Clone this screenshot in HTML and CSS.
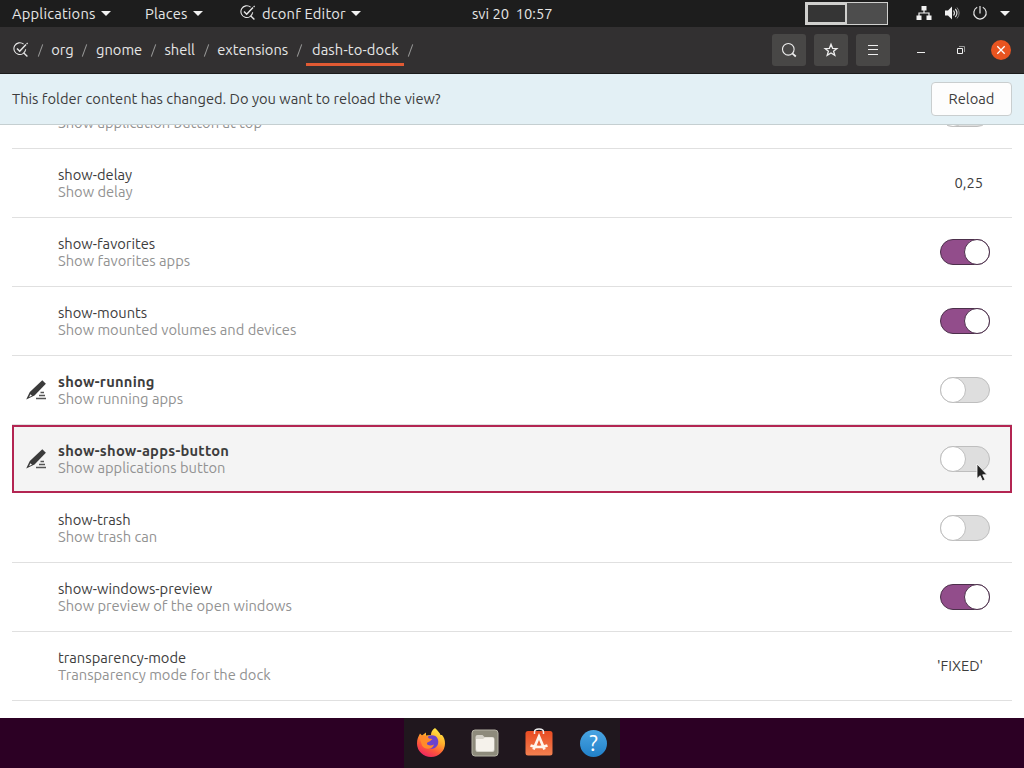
FILE: index.html
```
<!DOCTYPE html>
<html lang="en">
  <head>
    <meta charset="UTF-8" />
    <meta name="viewport" content="width=device-width, initial-scale=1.0" />
    <title>dconf Editor</title>
    <link rel="stylesheet" href="styles.css" />
  </head>
  <body>
    <!-- Shared icons -->
    <svg class="symbols" width="0" height="0">
      <symbol id="dconf" viewBox="0 0 16 16">
        <g fill="none" stroke="currentColor">
          <path d="M10.6 2.1A5.9 5.9 0 1 0 12.7 7.3" stroke-width="1.1" />
          <path d="M4 6.5l2.7 2.7 6.3-6.7" stroke-width="1.5" />
          <path d="M10.8 11l3.6 3.4" stroke-width="1.4" />
          <path d="M13.6 1.9l1-.8" stroke-width="1.3" />
        </g>
      </symbol>
      <symbol id="pencil" viewBox="0 0 22 22">
        <path d="M17.3 1.2l3.6 3.6L9.5 16.6 1.2 20.6l3.6-7.6z" fill="#3b3b3b" />
        <path d="M5.4 15.2l1.6 1.5-2.9 1.4z" fill="#fff" />
        <path d="M15.5 13.5h3.5M14 16.5h6M11 19.5h10" stroke="#555" stroke-width="1.3" />
      </symbol>
    </svg>

    <nav class="panel">
      <span class="menu menu-apps">Applications<i class="arrow"></i></span>
      <span class="menu menu-places">Places<i class="arrow"></i></span>
      <span class="menu menu-dconf"><svg class="icon"><use href="#dconf" /></svg>dconf Editor<i class="arrow"></i></span>
      <time class="clock">svi 20&nbsp; 10:57</time>
      <div class="workspaces"><span class="current"></span><span></span></div>
      <div class="tray">
        <svg width="16" height="16" viewBox="0 0 16 16" fill="#f2f2f2">
          <path d="M5.5 1h5v4.5h-5zM.5 10.5h5V15h-5zM10.5 10.5h5V15h-5z" />
          <path d="M8 5v3M3 11V8h10v3" fill="none" stroke="#f2f2f2" stroke-width="1.2" />
        </svg>
        <svg width="16" height="16" viewBox="0 0 16 16" fill="none" stroke="#ddd">
          <path d="M1 5.5h3l4-4v13l-4-4H1z" fill="#f2f2f2" stroke="none" />
          <path d="M9.5 5.5q2 2.5 0 5M11.3 4q3.3 4 0 8" stroke-width="1.2" />
          <path d="M13 2.5q4.3 5.5 0 11" stroke="#888" />
        </svg>
        <svg width="16" height="16" viewBox="0 0 16 16" fill="none" stroke="#e8e8e8" stroke-width="1.2">
          <path d="M5.2 2.3a6.2 6.2 0 1 0 5.6 0M8 1v7.5" />
        </svg>
        <i class="arrow"></i>
      </div>
    </nav>

    <header class="titlebar">
      <div class="path">
        <svg class="icon"><use href="#dconf" /></svg>
        <i class="slash"></i>
        <span class="crumb">org</span>
        <i class="slash"></i>
        <span class="crumb">gnome</span>
        <i class="slash"></i>
        <span class="crumb">shell</span>
        <i class="slash"></i>
        <span class="crumb">extensions</span>
        <i class="slash"></i>
        <span class="crumb active">dash-to-dock</span>
        <i class="slash"></i>
      </div>
      <div class="tools">
        <button>
          <svg width="16" height="16" viewBox="0 0 16 16" fill="none" stroke="#eee" stroke-width="1.1">
            <circle cx="7.3" cy="7.3" r="5.8" />
            <path d="M11.3 11.3l3.5 3.2" stroke-width="1.7" />
          </svg>
        </button>
        <button>
          <svg width="16" height="16" viewBox="0 0 16 16" fill="none" stroke="#eee" stroke-width="1.3">
            <path d="M8 2.3l1.6 4 4.3.2-3.3 2.7 1.2 4.2L8 11l-3.8 2.4 1.2-4.2-3.3-2.7 4.3-.2z" />
          </svg>
        </button>
        <button>
          <svg width="16" height="16" viewBox="0 0 16 16" stroke="#eee">
            <path d="M3 3.5h10M3 7.5h10M3 12.5h10" />
          </svg>
        </button>
      </div>
      <div class="window-controls">
        <svg width="16" height="16" viewBox="0 0 16 16"><path d="M4 10.5h8" stroke="#eee" /></svg>
        <svg width="16" height="16" viewBox="0 0 16 16" fill="none">
          <path d="M4.500 6.500h5v5h-5z" stroke="#f2f2f2" />
          <path d="M6 4.500h5.500V10" stroke="#999" />
        </svg>
        <span class="close">
          <svg width="10" height="10" viewBox="0 0 10 10"><path d="M1.3 1.3l7.4 7.4M8.7 1.3L1.3 8.7" stroke="#fff" stroke-width="1.3" /></svg>
        </span>
      </div>
    </header>

    <div class="infobar">
      <span>This folder content has changed. Do you want to reload the view?</span>
      <button>Reload</button>
    </div>

    <main class="keys">
      <div class="key">
        <div class="text"><b></b><span>Show application button at top</span></div>
        <i class="switch"></i>
      </div>
      <div class="key">
        <div class="text"><b>show-delay</b><span>Show delay</span></div>
        <span class="value">0,25</span>
      </div>
      <div class="key">
        <div class="text"><b>show-favorites</b><span>Show favorites apps</span></div>
        <i class="switch on"></i>
      </div>
      <div class="key">
        <div class="text"><b>show-mounts</b><span>Show mounted volumes and devices</span></div>
        <i class="switch on"></i>
      </div>
      <div class="key edited">
        <svg class="pencil"><use href="#pencil" /></svg>
        <div class="text"><b>show-running</b><span>Show running apps</span></div>
        <i class="switch"></i>
      </div>
      <div class="key edited selected">
        <svg class="pencil"><use href="#pencil" /></svg>
        <div class="text"><b>show-show-apps-button</b><span>Show applications button</span></div>
        <i class="switch"></i>
        <svg class="cursor" width="12" height="20" viewBox="0 0 12 20">
          <path d="M1 1v14.5l3.2-2.800 2.300 5.200 2.500-1.100-2.300-5h4.500z" fill="#222" stroke="#fff" stroke-width=".8" />
        </svg>
      </div>
      <div class="key">
        <div class="text"><b>show-trash</b><span>Show trash can</span></div>
        <i class="switch"></i>
      </div>
      <div class="key">
        <div class="text"><b>show-windows-preview</b><span>Show preview of the open windows</span></div>
        <i class="switch on"></i>
      </div>
      <div class="key">
        <div class="text"><b>transparency-mode</b><span>Transparency mode for the dock</span></div>
        <span class="value">'FIXED'</span>
      </div>
    </main>

    <footer class="desktop">
      <div class="dock">
        <!-- Firefox -->
        <svg width="30" height="30" viewBox="0 0 30 30">
          <defs>
            <linearGradient id="fox" x1=".8" y1="0" x2=".3" y2="1">
              <stop offset="0" stop-color="#fff04a" />
              <stop offset=".4" stop-color="#ffad2b" />
              <stop offset=".7" stop-color="#ff5939" />
              <stop offset="1" stop-color="#ee2364" />
            </linearGradient>
          </defs>
          <path d="M19 0c3 3 5 5 5.500 7l1.500 0c2 2 3 5 3 8.500a14 13.500 0 0 1-28 0c0-4 1-6 2-8l1-2 2 2 4-3v3l5-.5c0-3 1-5 4-7z" fill="url(#fox)" />
          <path d="M12 8.500c3-2 8-1.500 9.500 2 2 4 0 9-4 10-4 .8-8-1-8-5z" fill="#6a42cc" />
          <path d="M3 8l4-.5 4 .5 2 2.500 3.500.5-3 2.500c-1.500.8-3 1-2.500 2.500 1.500 2 4.500 1.500 7 .5-1 5-9 6-12 1z" fill="#ff8a2b" />
        </svg>
        <!-- Files -->
        <svg width="30" height="30" viewBox="0 0 30 30">
          <rect x="2" y="2" width="26" height="26" rx="3" fill="#8e8b7c" stroke="#b5b3a5" />
          <path d="M5.500 9q0-2 2-2h5l2 2h8q2 0 2 2v11q0 2-2 2h-15q-2 0-2-2z" fill="#d5d2c9" />
          <path d="M6 11h7l2-1.500h7q2 0 2 2v9.500q0 2-2 2H8q-2 0-2-2z" fill="#f5f2eb" />
        </svg>
        <!-- Ubuntu Software -->
        <svg width="30" height="30" viewBox="0 0 30 30" fill="none">
          <defs>
            <linearGradient id="bag" x1="0" y1="0" x2="0" y2="1">
              <stop offset="0" stop-color="#e94b22" />
              <stop offset="1" stop-color="#f38050" />
            </linearGradient>
          </defs>
          <rect x="1.500" y="3" width="27" height="24.500" rx="2.500" fill="url(#bag)" />
          <path d="M10.500 6V4q0-3 4.500-3t4.500 3v2" stroke="#eee" stroke-width="1.500" />
          <path d="M9.500 21.500L15 8.500l5.500 13M6.500 17.500q8.500 3 17 0" stroke="#fff5ed" stroke-width="2.700" />
        </svg>
        <!-- Help -->
        <span class="help">?</span>
      </div>
    </footer>
  </body>
</html>
```
FILE: styles.css
```
*,
*::before {
  box-sizing: border-box;
}

body {
  display: flex;
  flex-direction: column;
  height: 768px;
  margin: 0;
  overflow: hidden;
  font: 14.7px/17px Ubuntu, 'Noto Sans', sans-serif;
  color: #3d3d3d;
  background: #fff;
}

svg {
  flex: none;
}

button {
  font: inherit;
  color: inherit;
}

.symbols {
  position: absolute;
}

.icon {
  width: 16px;
  height: 16px;
}

.arrow {
  border: 5px solid transparent;
  border-top-color: #f2f2f2;
  border-bottom: 0;
}

/* Top panel */
.panel {
  display: flex;
  align-items: center;
  flex: none;
  height: 27px;
  padding: 0 0 1px 12px;
  color: #e6e6e6;
  background: #1d1d1d;
  white-space: nowrap;
}

.menu {
  display: flex;
  align-items: center;
  letter-spacing: 0.2px;
}
.menu .arrow {
  margin-left: 5px;
}
.menu .icon {
  margin-right: 6px;
}
.menu-apps {
  width: 133px;
}
.menu-places {
  width: 95px;
}
.menu-dconf {
  width: 232px;
}

.clock {
  width: 333px;
}

.workspaces {
  display: flex;
  width: 83px;
  height: 23px;
  margin-top: 1px;
  border: 1px solid #d0d0ce;
  background: #4d4d4d;
}
.workspaces .current {
  width: 41px;
  border: 2px solid #d0d0ce;
  background: #353535;
}

.tray {
  display: flex;
  align-items: center;
  gap: 12px;
  margin-left: 28px;
}

/* Titlebar */
.titlebar {
  display: flex;
  align-items: center;
  flex: none;
  height: 47px;
  padding: 0 13px;
  color: #e6e6e6;
  background: #323031;
  border-bottom: 1px solid #1b1b1b;
}

.path {
  display: flex;
  align-items: center;
  height: 46px;
  width: 759px;
}

.slash {
  width: 1px;
  height: 13px;
  margin: 0 10.6px;
  background: #999;
  transform: rotate(20deg);
}

.crumb {
  height: 32px;
  line-height: 31px;
}
.active {
  width: 98px;
  margin: 0 -5px 0 -4px;
  text-align: center;
  letter-spacing: 0.15px;
  border-bottom: 3px solid #e05a33;
  border-radius: 3px 3px 0 0;
}

.tools {
  display: flex;
  gap: 8px;
}
.tools button {
  display: flex;
  align-items: center;
  justify-content: center;
  width: 34px;
  height: 32px;
  padding: 0;
  background: #484746;
  border: 0;
  border-radius: 3px;
}

.window-controls {
  display: flex;
  align-items: center;
  gap: 24px;
  margin-left: 23px;
}
.close {
  display: flex;
  align-items: center;
  justify-content: center;
  width: 20px;
  height: 20px;
  margin-left: -2px;
  background: #e95420;
  border-radius: 50%;
}

/* Infobar */
.infobar {
  display: flex;
  align-items: center;
  justify-content: space-between;
  flex: none;
  height: 51px;
  padding: 0 12px;
  background: #e3f0f5;
  border-bottom: 1px solid #c5cfd1;
}
.infobar span {
  padding-bottom: 2px;
}
.infobar button {
  width: 81px;
  height: 34px;
  padding: 0 0 2px;
  background: #fdfdfd;
  border: 1px solid #c9cecf;
  border-radius: 4px;
}

/* Keys list */
.keys {
  height: 593px;
  padding: 0 12px;
  overflow: hidden;
}

.key {
  display: flex;
  align-items: center;
  height: 69px;
  padding: 0 22px 0 46px;
  border-bottom: 1px solid #e0e0e0;
}
.key:first-child {
  margin-top: -45px;
}

.text {
  display: flex;
  flex-direction: column;
  flex: 1;
}
.text b {
  height: 17px;
  font-weight: normal;
}
.text span {
  color: #929292;
}

.edited {
  padding-left: 13px;
}
.edited .text b {
  font-weight: bold;
  letter-spacing: 0.25px;
}

.pencil {
  width: 22px;
  height: 22px;
  margin-right: 11px;
}

.selected {
  position: relative;
  height: 68px;
  margin-bottom: 1px;
  padding: 0 20px 0 11px;
  background: #f4f4f4;
  border: 2px solid #b32552;
}

.value {
  padding: 0 7px 2px 0;
}

.switch {
  width: 50px;
  height: 26px;
  background: #dedede;
  border: 1px solid #bebebe;
  border-radius: 13px;
}
.switch::before {
  content: '';
  display: block;
  width: 26px;
  height: 26px;
  margin: -1px;
  background: #fff;
  border: 1px solid #bebebe;
  border-radius: 50%;
}
.switch.on {
  background: #924d8b;
  border-color: #4c304b;
}
.switch.on::before {
  margin-left: 23px;
  border-color: #4c304b;
}

.cursor {
  position: absolute;
  right: 22px;
  top: 36px;
}

/* Desktop strip with the dock */
.desktop {
  display: flex;
  justify-content: center;
  flex: none;
  height: 50px;
  background: #2c0024;
}

.dock {
  display: flex;
  align-items: center;
  justify-content: center;
  gap: 24px;
  width: 216px;
  background: #20171e;
}

.help {
  width: 27px;
  height: 27px;
  margin: 0 1px 0 2px;
  font-size: 22px;
  line-height: 26px;
  text-align: center;
  color: #fff;
  background: linear-gradient(#4aa5e2, #2180c9);
  border-radius: 50%;
}
```
